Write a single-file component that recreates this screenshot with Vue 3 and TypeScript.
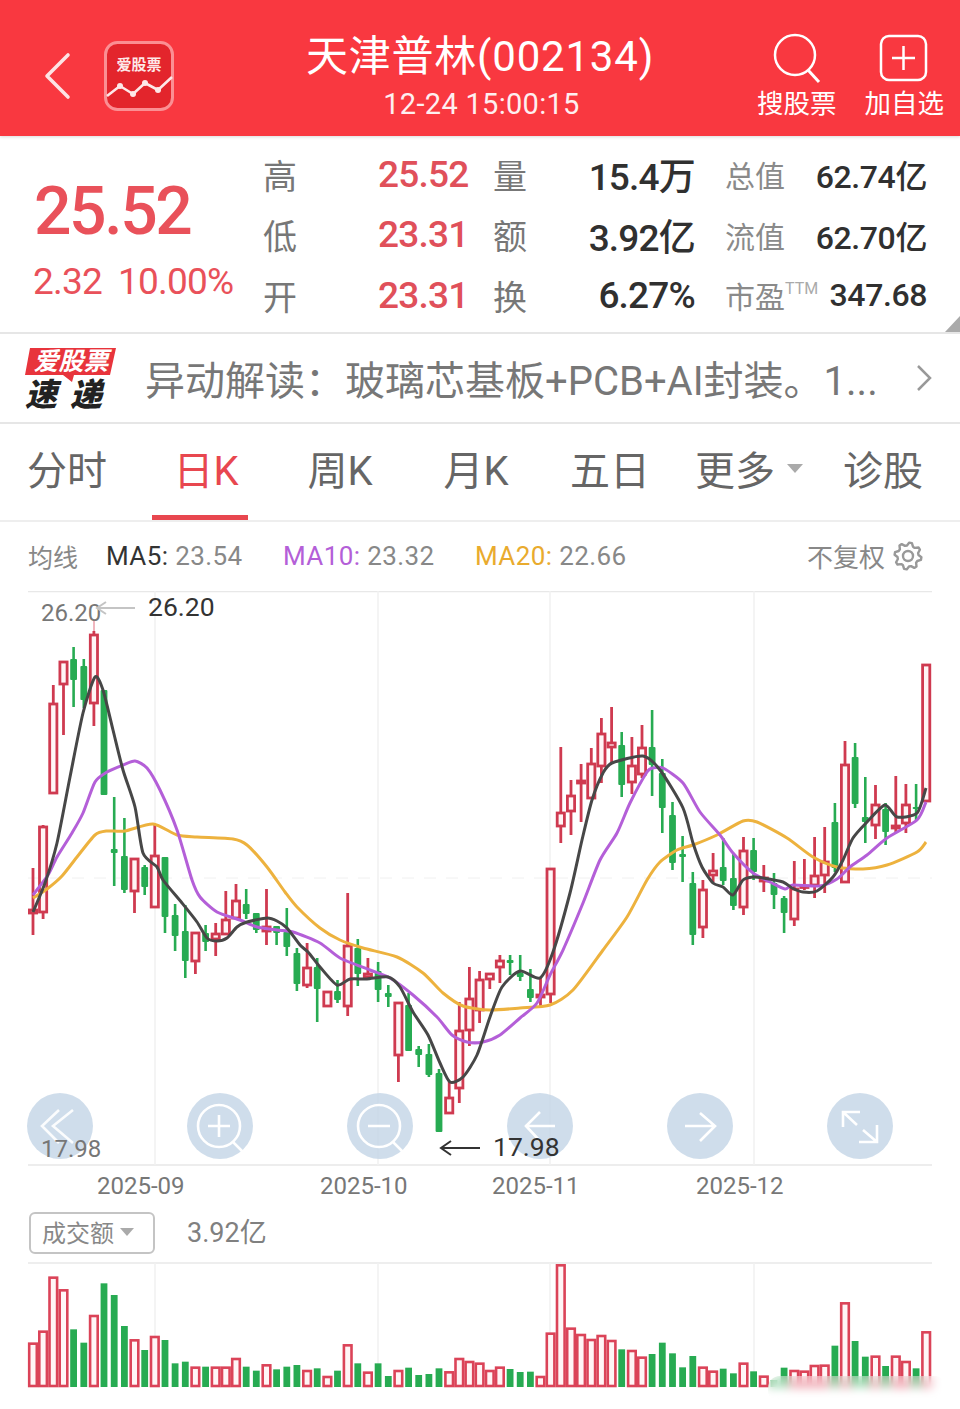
<template>
  <div class="page">
    <header class="top">
      <div class="top-left">
        <svg class="back" width="28" height="48" viewBox="0 0 28 48"><path d="M24 3 L3 24 L24 45" fill="none" stroke="#fde3e4" stroke-width="3.6" stroke-linecap="round" stroke-linejoin="round" /></svg>
        <svg class="logo" width="70" height="70" viewBox="0 0 70 70">
          <rect x="1.5" y="1.5" width="67" height="67" rx="12" fill="#e3252c" stroke="#fb8f93" stroke-width="3" />
          <text x="35" y="29" text-anchor="middle" class="logo-txt">爱股票</text>
          <polyline points="3,55 16,45 29,53 41,42 54,49 68,36" fill="none" stroke="#fde8e8" stroke-width="2.6" stroke-linejoin="round" />
          <circle v-for="d in logoDots" :key="d[0]" :cx="d[0]" :cy="d[1]" r="3" fill="#fde8e8" />
        </svg>
      </div>
      <div class="top-mid">
        <div class="title">天津普林(002134)</div>
        <div class="stamp">12-24 15:00:15</div>
      </div>
      <div class="top-right">
        <div class="act">
          <svg width="52" height="52" viewBox="0 0 52 52"><circle cx="24" cy="23" r="20" fill="none" stroke="#fff" stroke-width="2.5" /><path d="M37 38 L48 50" stroke="#fff" stroke-width="3" /></svg>
          <span>搜股票</span>
        </div>
        <div class="act">
          <svg width="52" height="52" viewBox="0 0 52 52"><rect x="3" y="4" width="45" height="44" rx="8" fill="none" stroke="#fff" stroke-width="2.5" /><path d="M25.5 14 V38 M14 26 H37" stroke="#fff" stroke-width="2.5" /></svg>
          <span>加自选</span>
        </div>
      </div>
    </header>

    <section class="quote">
      <div class="price">
        <div class="big">25.52</div>
        <div class="chg"><span>2.32</span><span>10.00%</span></div>
      </div>
      <div class="stats">
        <template v-for="r in rows" :key="r.a">
          <span class="lab">{{ r.a }}</span>
          <span class="red num">{{ r.b }}</span>
          <span class="lab">{{ r.c }}</span>
          <span class="dark num">{{ r.d }}</span>
          <span class="lab2">{{ r.e }}<sup v-if="r.ttm">TTM</sup></span>
          <span class="dark num2">{{ r.f }}</span>
        </template>
      </div>
      <i class="corner"></i>
    </section>

    <section class="news">
      <svg class="news-logo" width="96" height="70" viewBox="0 0 96 70">
        <path d="M8 2 H94 L88 29 H52 L50 36 L41 29 H3 Z" fill="#e8343c" />
        <text x="49" y="24" text-anchor="middle" class="news-a">爱股票</text>
        <text x="3" y="60" class="news-b">速</text>
        <text x="48" y="60" class="news-b">递</text>
      </svg>
      <div class="news-txt">异动解读：玻璃芯基板+PCB+AI封装。1...</div>
      <svg width="16" height="28" viewBox="0 0 16 28"><path d="M2 2 L14 14 L2 26" fill="none" stroke="#999" stroke-width="2.5" /></svg>
    </section>

    <nav class="tabs">
      <div v-for="t in tabs" :key="t" class="tab" :class="{ on: t === '日K' }">
        {{ t }}<i v-if="t === '更多'" class="tri"></i>
      </div>
    </nav>

    <div class="legend">
      <span class="lg-a">均线</span>
      <span class="ma"><b class="c5">MA5:</b> 23.54</span>
      <span class="ma"><b class="c10">MA10:</b> 23.32</span>
      <span class="ma"><b class="c20">MA20:</b> 22.66</span>
      <span class="fq">不复权</span>
      <svg width="32" height="32" viewBox="0 0 32 32"><path :d="gear" fill="none" stroke="#999" stroke-width="2.4" stroke-linejoin="round" /><circle cx="16" cy="16" r="5" fill="none" stroke="#999" stroke-width="2.4" /></svg>
    </div>

    <svg class="chart" width="960" height="615" viewBox="0 591 960 615">
      <path d="M28 591.5 H932 M28 1165 H932" stroke="#e8e8e8" stroke-width="1.5" />
      <path d="M28 878 H932" stroke="#f0f0f0" stroke-width="1" stroke-dasharray="12 10" />
      <path v-for="g in gridX" :key="g" :d="`M${g} 591 V1165`" stroke="#f1f1f1" stroke-width="1.5" />
      <path d="M94 620 V631" stroke="#f0b6be" stroke-width="2" />
      <g v-for="(c, i) in candles" :key="i">
        <template v-if="c[4]">
          <path :d="`M${xAt(i)} ${c[0]} V${c[1]} M${xAt(i)} ${c[2]} V${c[3]}`" stroke="#cf3a50" stroke-width="2.8" />
          <rect :x="xAt(i) - 3.6" :y="c[1] + 1" width="7.2" :height="Math.max(c[2] - c[1] - 2, 1.5)" fill="#fff5f6" stroke="#cf3a50" stroke-width="2.8" />
        </template>
        <template v-else>
          <path :d="`M${xAt(i)} ${c[0]} V${c[3]}`" stroke="#27ab52" stroke-width="2.6" />
          <rect :x="xAt(i) - 3.4" :y="c[1]" width="6.8" :height="c[2] - c[1]" rx="1" fill="#27ab52" />
        </template>
      </g>
      <path :d="ma20" class="ln" stroke="#edb23e" />
      <path :d="ma10" class="ln" stroke="#b45fd8" />
      <path :d="ma5" class="ln" stroke="#474747" />

      <circle v-for="b in btnX" :key="b" :cx="b" cy="1126" r="33" fill="#c3d4e6" fill-opacity=".8" />
      <g fill="none" stroke="#fff" stroke-width="2.6">
        <path d="M59 1110 L42 1126 L59 1143 M73 1110 L53 1126 L73 1143" opacity=".9" />
        <circle cx="219" cy="1126" r="21" /><path d="M233 1142 L243 1152 M208 1126 H230 M219 1115 V1137" />
        <circle cx="379" cy="1126" r="21" /><path d="M393 1142 L403 1152 M368 1126 H390" />
        <path d="M525 1126 H555 M540 1112 L526 1126 L540 1141" />
        <path d="M685 1126 H715 M700 1113 L715 1126 L700 1141" />
        <path d="M843 1127 V1112 H860 M843 1112 L857 1125 M859 1142 H877 V1125 M877 1142 L863 1130" />
      </g>

      <text x="41" y="621" class="hl">26.20</text>
      <path d="M135 608 H97 M106 602 L97 608 L106 614" fill="none" stroke="#c4c4c4" stroke-width="2" />
      <text x="148" y="616" class="hv">26.20</text>
      <text x="41" y="1157" class="hl">17.98</text>
      <path d="M480 1148 H441 M451 1141 L441 1148 L451 1155" fill="none" stroke="#333" stroke-width="2" />
      <text x="493" y="1156" class="hv">17.98</text>
      <text v-for="d in dates" :key="d.t" :x="d.x" y="1194" class="dt">{{ d.t }}</text>
    </svg>

    <div class="vol-head">
      <div class="vol-btn">成交额<i class="tri small"></i></div>
      <span class="vol-num">3.92亿</span>
    </div>

    <svg class="vol" width="960" height="147" viewBox="0 1262 960 147">
      <path d="M28 1263 H932" stroke="#e8e8e8" stroke-width="1.5" />
      <path v-for="g in gridX" :key="g" :d="`M${g} 1263 V1387`" stroke="#f1f1f1" stroke-width="1.5" />
      <template v-for="(v, i) in volumes" :key="i">
        <rect v-if="v[1]" :x="xAt(i) - 3.8" :y="v[0] + 1" width="7.6" :height="1385 - v[0]" fill="#fff5f6" stroke="#db4358" stroke-width="2.6" />
        <rect v-else :x="xAt(i) - 3.4" :y="v[0]" width="6.8" :height="1387 - v[0]" fill="#27ab52" />
      </template>
    </svg>
    <div class="smudge"></div>
  </div>
</template>

<script setup lang="ts">
type Pt = [number, number];

const rows = [
  { a: '高', b: '25.52', c: '量', d: '15.4万', e: '总值', f: '62.74亿', ttm: false },
  { a: '低', b: '23.31', c: '额', d: '3.92亿', e: '流值', f: '62.70亿', ttm: false },
  { a: '开', b: '23.31', c: '换', d: '6.27%', e: '市盈', f: '347.68', ttm: true },
];
const tabs = ['分时', '日K', '周K', '月K', '五日', '更多', '诊股'];
const gridX = [155, 378, 550, 754];
const btnX = [60, 220, 380, 540, 700, 860];
const logoDots = [[16, 45], [29, 53], [41, 42], [54, 49]];
const dates = [
  { t: '2025-09', x: 97 },
  { t: '2025-10', x: 320 },
  { t: '2025-11', x: 492 },
  { t: '2025-12', x: 696 },
];

const xAt = (i: number) => +(33 + i * 10.15).toFixed(1);

// eight rounded teeth around the centre of the 32px box
const gear = Array.from({ length: 32 }, (_, i) => {
  const a = (i / 32) * Math.PI * 2;
  const r = i % 4 < 2 ? 13.5 : 10.5;
  return `${i ? 'L' : 'M'}${(16 + r * Math.cos(a + 0.1)).toFixed(1)} ${(16 + r * Math.sin(a + 0.1)).toFixed(1)}`;
}).join(' ') + ' Z';

// high, body top, body bottom, low, 1 = up (red)
const candles: number[][] = [
  [868, 909, 914, 935, 1], [825, 826, 913, 919, 1], [685, 703, 794, 794, 1], [661, 661, 685, 735, 1],
  [647, 659, 680, 707, 0], [659, 666, 700, 708, 0], [631, 634, 704, 726, 1], [690, 690, 795, 795, 0],
  [797, 849, 853, 886, 0], [818, 856, 890, 893, 0], [858, 858, 892, 913, 1], [865, 867, 887, 895, 0],
  [825, 855, 908, 908, 1], [857, 857, 917, 933, 0], [904, 915, 936, 951, 0], [905, 931, 961, 978, 0],
  [932, 932, 962, 974, 1], [925, 933, 942, 951, 0], [923, 933, 940, 956, 1], [891, 919, 935, 935, 1],
  [884, 900, 919, 919, 1], [889, 904, 914, 919, 0], [913, 913, 930, 933, 0], [889, 926, 932, 945, 1],
  [926, 926, 933, 945, 0], [908, 932, 947, 956, 0], [948, 953, 984, 991, 0], [943, 967, 986, 988, 1],
  [958, 967, 989, 1022, 0], [991, 991, 1007, 1007, 1], [980, 991, 1000, 1003, 0], [893, 945, 1007, 1016, 1],
  [939, 948, 974, 986, 0], [958, 973, 978, 978, 1], [962, 971, 990, 1002, 0], [985, 993, 997, 1007, 0],
  [1002, 1002, 1056, 1082, 1], [993, 1005, 1051, 1051, 0], [1046, 1049, 1055, 1067, 0], [1044, 1054, 1075, 1077, 0],
  [1069, 1073, 1132, 1132, 0], [1082, 1097, 1114, 1114, 1], [1002, 1030, 1089, 1103, 1], [967, 998, 1031, 1046, 1],
  [971, 979, 1011, 1023, 1], [973, 973, 980, 989, 1], [955, 960, 968, 983, 1], [955, 960, 963, 975, 0],
  [955, 973, 977, 981, 0], [969, 989, 998, 1002, 0], [978, 994, 998, 1007, 1], [868, 868, 995, 1003, 1],
  [747, 812, 827, 843, 1], [780, 795, 812, 835, 1], [764, 780, 784, 822, 1], [748, 763, 799, 799, 1],
  [718, 733, 767, 783, 1], [707, 742, 748, 763, 1], [732, 745, 785, 797, 0], [737, 765, 783, 794, 1],
  [725, 747, 775, 778, 1], [710, 747, 765, 796, 0], [759, 773, 808, 833, 0], [802, 815, 863, 870, 0],
  [836, 854, 857, 882, 0], [872, 883, 935, 945, 0], [880, 889, 928, 938, 1], [853, 870, 876, 882, 1],
  [838, 867, 881, 885, 0], [853, 878, 906, 910, 0], [837, 850, 908, 915, 1], [838, 850, 872, 880, 0],
  [865, 877, 882, 892, 1], [873, 883, 895, 909, 0], [896, 898, 913, 933, 0], [861, 888, 920, 926, 1],
  [859, 885, 888, 890, 1], [837, 875, 886, 898, 1], [827, 861, 876, 893, 1], [803, 822, 868, 872, 0],
  [741, 764, 883, 883, 1], [743, 757, 804, 808, 0], [777, 817, 822, 843, 0], [785, 804, 826, 839, 1],
  [803, 809, 832, 845, 0], [776, 825, 829, 832, 1], [784, 804, 824, 833, 1], [784, 807, 809, 820, 0],
  [664, 664, 802, 802, 1],
];

// top of each bar, 1 = up (red)
const volumes: number[][] = [
  [428, 1], [392, 1], [230, 1], [268, 1], [388, 0], [428, 0], [345, 1], [250, 0], [285, 0], [378, 0], [418, 1],
  [450, 0], [408, 1], [420, 0], [490, 0], [485, 0], [500, 1], [500, 0], [500, 1], [500, 1], [474, 1], [500, 0],
  [512, 0], [493, 1], [508, 0], [500, 0], [495, 0], [510, 1], [505, 0], [528, 1], [512, 0], [433, 1], [490, 0],
  [515, 1], [490, 0], [528, 0], [510, 1], [503, 0], [525, 0], [522, 0], [505, 0], [514, 1], [474, 1], [483, 1],
  [488, 1], [510, 1], [500, 1], [507, 0], [516, 0], [515, 0], [528, 1], [398, 1], [193, 1], [383, 1], [402, 1],
  [417, 1], [405, 1], [420, 1], [448, 0], [450, 1], [470, 1], [462, 0], [428, 0], [460, 0], [502, 0], [468, 0],
  [500, 1], [512, 1], [506, 0], [520, 0], [488, 1], [514, 0], [527, 1], [540, 0], [503, 0], [510, 1], [512, 1],
  [495, 1], [494, 1], [437, 0], [307, 1], [423, 0], [470, 0], [467, 1], [498, 0], [467, 1], [483, 1], [505, 0],
  [394, 1],
].map(([t, r]) => [1200 + t / 3, r]);

const pts5: Pt[] = [
  [33, 912], [45, 883], [57, 843], [70, 777], [83, 713], [95, 677], [103, 690], [113, 730], [123, 770], [135, 807],
  [143, 853], [157, 867], [163, 880], [182, 903], [197, 922], [207, 938], [217, 941], [227, 938], [237, 927],
  [247, 922], [267, 918], [277, 921], [287, 928], [300, 945], [308, 952], [320, 967], [337, 985], [350, 979],
  [367, 979], [388, 977], [400, 987], [413, 1012], [428, 1035], [440, 1063], [450, 1082], [463, 1077], [477, 1055],
  [490, 1017], [502, 987], [520, 971], [540, 978], [553, 952], [570, 893], [582, 840], [592, 800], [603, 773],
  [612, 763], [643, 756], [660, 770], [683, 808], [693, 843], [702, 867], [713, 883], [723, 887], [733, 895],
  [743, 880], [753, 877], [763, 878], [783, 882], [792, 888], [803, 892], [817, 891], [833, 877], [843, 860],
  [853, 838], [867, 822], [885, 805], [897, 817], [917, 813], [926, 788],
];
const pts10: Pt[] = [
  [33, 895], [48, 875], [57, 857], [72, 833], [83, 813], [95, 782], [107, 772], [123, 765], [135, 761], [147, 768],
  [160, 790], [177, 830], [192, 880], [200, 897], [217, 912], [240, 920], [257, 927], [277, 930], [293, 932],
  [320, 943], [340, 958], [370, 970], [390, 978], [413, 995], [437, 1017], [452, 1035], [467, 1042], [483, 1042],
  [500, 1035], [520, 1018], [537, 1003], [550, 975], [563, 950], [583, 903], [600, 860], [617, 833], [630, 803],
  [647, 772], [653, 768], [663, 768], [683, 783], [700, 812], [720, 835], [733, 853], [753, 873], [770, 882],
  [785, 889], [793, 885], [820, 886], [837, 879], [850, 867], [867, 855], [887, 838], [917, 820], [926, 802],
];
const pts20: Pt[] = [
  [33, 898], [47, 889], [62, 876], [77, 857], [95, 835], [107, 831], [125, 831], [153, 824], [177, 835], [197, 837],
  [233, 839], [247, 845], [267, 867], [285, 892], [297, 907], [320, 928], [340, 940], [363, 948], [397, 957],
  [423, 973], [443, 993], [463, 1006], [490, 1010], [520, 1008], [550, 1005], [573, 990], [603, 950], [627, 917],
  [647, 880], [660, 862], [677, 850], [693, 845], [717, 835], [743, 821], [757, 822], [787, 838], [813, 857],
  [837, 867], [863, 869], [887, 865], [917, 852], [926, 842],
];

// soft catmull-rom so the averages don't look like straight segments
function smooth(p: Pt[]) {
  let d = `M${p[0][0]} ${p[0][1]}`;
  for (let i = 0; i < p.length - 1; i++) {
    const a = p[i - 1] || p[i];
    const b = p[i];
    const c = p[i + 1];
    const e = p[i + 2] || c;
    const k = 0.12;
    d += ` C${b[0] + (c[0] - a[0]) * k} ${b[1] + (c[1] - a[1]) * k} ${c[0] - (e[0] - b[0]) * k} ${c[1] - (e[1] - b[1]) * k} ${c[0]} ${c[1]}`;
  }
  return d;
}
const ma5 = smooth(pts5);
const ma10 = smooth(pts10);
const ma20 = smooth(pts20);
</script>

<style>
html,
body {
  margin: 0;
  background: #fff;
}
</style>

<style scoped>
.page {
  position: relative;
  width: 960px;
  height: 1409px;
  overflow: hidden;
  background: #fff;
  font-family: Roboto, "Noto Sans CJK SC", sans-serif;
}
.top {
  height: 136px;
  background: #f93840;
  color: #fff;
  display: grid;
  grid-template-columns: 1fr auto 1fr;
  box-shadow: 0 1px 3px rgba(0, 0, 0, .15);
}
.top-left {
  display: flex;
  align-items: center;
  gap: 32px;
  padding: 16px 0 0 44px;
}
.back {
  flex: none;
}
.logo-txt {
  font-size: 15px;
  font-weight: 700;
  fill: #fde8e8;
}
.top-mid {
  text-align: center;
  padding-top: 33px;
}
.title {
  font-size: 42px;
  line-height: 48px;
  letter-spacing: .8px;
}
.stamp {
  font-size: 29px;
  line-height: 34px;
  margin-top: 6px;
  letter-spacing: .3px;
  margin-left: 3px;
  opacity: .92;
}
.top-right {
  display: flex;
  justify-content: flex-end;
  gap: 28px;
  padding: 32px 16px 0 0;
}
.act {
  display: flex;
  flex-direction: column;
  align-items: center;
  font-size: 26.5px;
  line-height: 30px;
}
.act svg {
  margin-bottom: 5px;
}
.quote {
  position: relative;
  height: 196px;
  display: flex;
  border-bottom: 2px solid #e6e6e6;
}
.price {
  width: 263px;
  padding: 38px 0 0 34px;
  box-sizing: border-box;
  color: #e9515a;
}
.big {
  font-size: 66px;
  line-height: 76px;
  letter-spacing: -2.4px;
  font-weight: 500;
}
.chg {
  display: flex;
  gap: 16px;
  font-size: 37px;
  line-height: 44px;
  margin-top: 10px;
  margin-left: -1px;
  letter-spacing: -.8px;
  white-space: nowrap;
}
.stats {
  display: grid;
  grid-template-columns: 40px 190px 60px 142px 92px 140px;
  grid-auto-rows: 60.5px;
  align-items: center;
  padding-top: 8px;
}
.lab {
  font-size: 34px;
  color: #777;
}
.lab2 {
  font-size: 30px;
  color: #8a8a8a;
  white-space: nowrap;
  padding-left: 30px;
  margin-right: -30px;
}
.lab2 sup {
  font-size: 16px;
  vertical-align: 14px;
  line-height: 0;
  color: #aaa;
}
.num {
  font-size: 37px;
  letter-spacing: -.8px;
  font-weight: 500;
}
.red {
  color: #e0505a;
  padding-left: 75px;
  white-space: nowrap;
}
.dark {
  color: #303030;
  text-align: right;
  white-space: nowrap;
}
.num2 {
  font-size: 32px;
  font-weight: 500;
  letter-spacing: -.4px;
}
.corner {
  position: absolute;
  right: 0;
  bottom: 0;
  border-style: solid;
  border-width: 0 0 16px 15px;
  border-color: transparent transparent #aaa transparent;
}
.news {
  height: 88px;
  display: flex;
  align-items: center;
  padding: 0 28px 0 22px;
  border-bottom: 2px solid #e6e6e6;
}
.news-logo {
  margin-top: 6px;
}
.news-a {
  font-size: 25px;
  font-weight: 700;
  font-style: italic;
  fill: #fff;
}
.news-b {
  font-size: 32px;
  font-weight: 900;
  font-style: italic;
  fill: #222;
}
.news-txt {
  flex: 1;
  margin-left: 27px;
  font-size: 40px;
  color: #777;
  white-space: nowrap;
}
.tabs {
  height: 96px;
  display: grid;
  grid-template-columns: 134px 144px 124px 148px 120px 158px 110px;
  border-bottom: 2px solid #eee;
}
.tab {
  position: relative;
  display: flex;
  justify-content: center;
  align-items: center;
  font-size: 40px;
  color: #666;
  padding-bottom: 8px;
}
.tab.on {
  color: #e8474f;
}
.tab.on::after {
  content: "";
  position: absolute;
  left: 18px;
  bottom: 0;
  width: 96px;
  height: 5px;
  background: #e8474f;
}
.tri {
  display: inline-block;
  margin-left: 12px;
  border-style: solid;
  border-width: 9px 8px 0;
  border-color: #aaa transparent transparent;
}
.tri.small {
  border-width: 8px 7px 0;
  margin-left: 6px;
}
.legend {
  height: 69px;
  box-sizing: border-box;
  display: flex;
  align-items: center;
  padding: 0 36px 2px 28px;
  font-size: 26px;
  color: #888;
}
.lg-a {
  width: 78px;
  font-size: 25px;
}
.ma {
  width: 177px;
  letter-spacing: .4px;
}
.ma + .ma {
  width: 192px;
}
.ma b {
  font-weight: 400;
}
.c5 {
  color: #333;
}
.c10 {
  color: #b45fd8;
}
.c20 {
  color: #e9ab2e;
}
.fq {
  margin-left: auto;
  margin-right: 7px;
}
.chart,
.vol {
  display: block;
}
.ln {
  fill: none;
  stroke-width: 3;
  stroke-linejoin: round;
}
.hl {
  font-size: 24px;
  fill: #777;
}
.hv {
  font-size: 26.5px;
  fill: #333;
}
.dt {
  font-size: 24px;
  fill: #777;
}
.vol-head {
  height: 56px;
  box-sizing: border-box;
  display: flex;
  align-items: flex-start;
  padding: 6px 0 0 29px;
  gap: 32px;
}
.vol-btn {
  width: 126px;
  height: 42px;
  box-sizing: border-box;
  border: 2px solid #c4c4c4;
  border-radius: 6px;
  padding: 0 8px 3px 0;
  display: flex;
  align-items: center;
  justify-content: center;
  font-size: 24px;
  color: #888;
}
.vol-num {
  font-size: 27px;
  line-height: 42px;
  color: #808080;
}
.smudge {
  position: absolute;
  left: 768px;
  top: 1376px;
  width: 178px;
  height: 26px;
  backdrop-filter: blur(5px);
  background: rgba(255, 255, 255, .35);
  border-radius: 12px;
}
</style>
